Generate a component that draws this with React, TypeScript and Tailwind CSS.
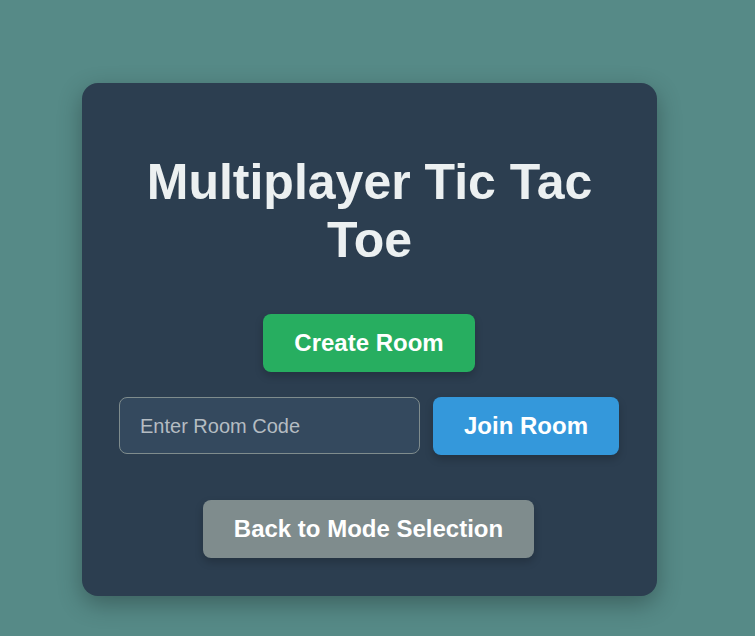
export default function App() {
  return (
    <div
      className="min-h-[636px] w-full bg-[#568a87] pt-[83px] pl-[82px]"
      style={{ fontFamily: '"Liberation Sans", Arial, sans-serif' }}
    >
      <div className="flex w-[575px] flex-col items-center rounded-[16px] bg-[#2c3e50] pt-[71px] pb-[38px] shadow-[0_8px_24px_rgba(0,0,0,0.3)]">
        <h1 className="w-[495px] text-center text-[50px] font-bold leading-[57.5px] text-[#ecf0f1]">
          Multiplayer Tic Tac Toe
        </h1>
        <button className="mt-[45px] -ml-px h-[58px] w-[212px] rounded-[8px] bg-[#27ae60] text-[24px] font-bold text-white shadow-[0_4px_8px_rgba(0,0,0,0.2)]">
          Create Room
        </button>
        <div className="mt-[25px] -ml-px flex w-[500px] items-start gap-[13px]">
          <input
            className="h-[57px] w-[301px] rounded-[8px] border border-[#7f8c8d] bg-[#34495e] px-[20px] pt-px text-[20px] text-[#ecf0f1] outline-none placeholder:text-[#b4bcc2]"
            placeholder="Enter Room Code"
          />
          <button className="h-[58px] w-[186px] rounded-[8px] bg-[#3498db] text-[24px] font-bold text-white shadow-[0_4px_8px_rgba(0,0,0,0.2)]">
            Join Room
          </button>
        </div>
        <button className="mt-[45px] -ml-[2px] h-[58px] w-[331px] rounded-[8px] bg-[#7f8c8d] text-[24px] font-bold text-white shadow-[0_4px_8px_rgba(0,0,0,0.2)]">
          Back to Mode Selection
        </button>
      </div>
    </div>
  );
}
